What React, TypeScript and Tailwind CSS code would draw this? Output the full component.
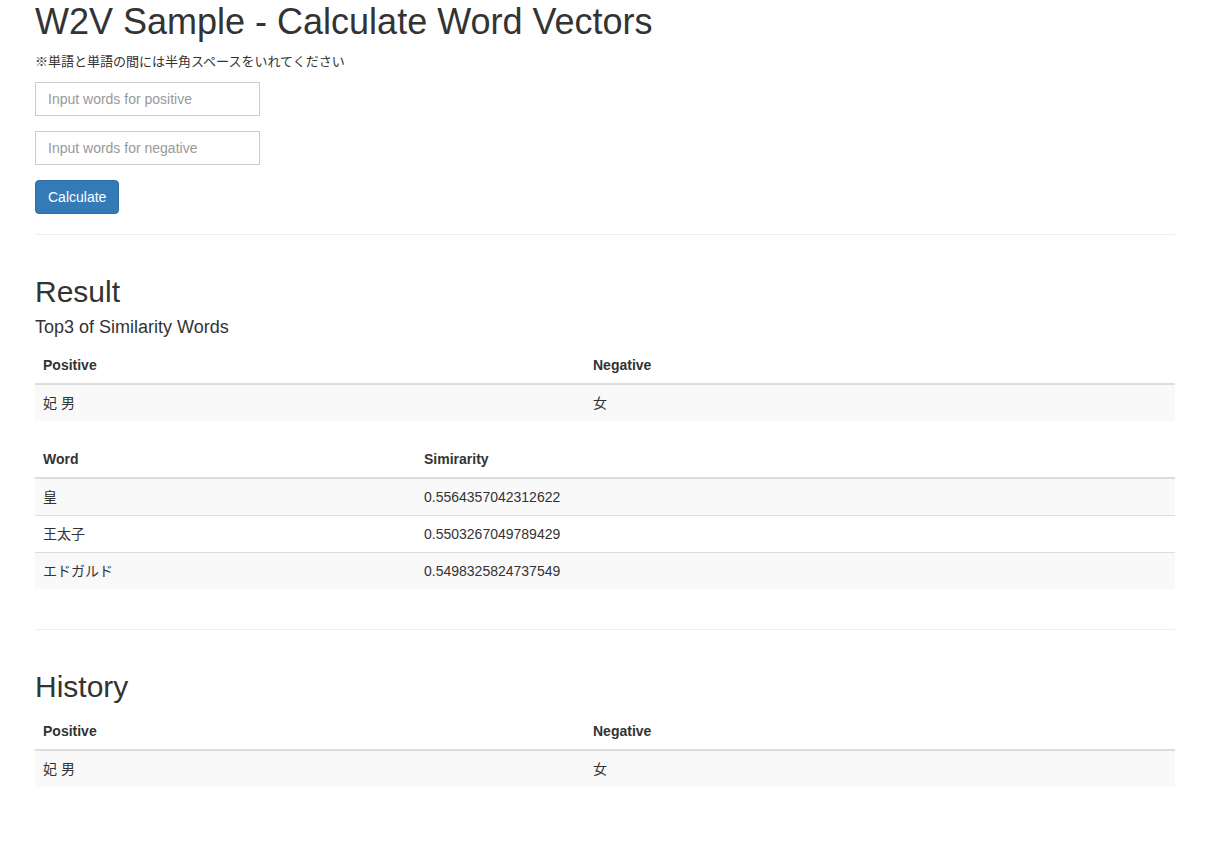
const font = { fontFamily: '"Liberation Sans", "Noto Sans CJK JP", sans-serif' };

const th = "border-b-2 border-[#ddd] p-2 text-left align-bottom font-bold leading-5";
const td = "border-t border-[#ddd] p-2 align-top leading-5";

function PairTable({ pos, neg }: { pos: string; neg: string }) {
  return (
    <table className="mb-5 w-full table-fixed border-collapse">
      <thead>
        <tr>
          <th className={`${th} w-[550px]`}>Positive</th>
          <th className={th}>Negative</th>
        </tr>
      </thead>
      <tbody>
        <tr className="bg-[#f9f9f9]">
          <td className={td}>{pos}</td>
          <td className={td}>{neg}</td>
        </tr>
      </tbody>
    </table>
  );
}

const results = [
  { word: "皇", score: "0.5564357042312622" },
  { word: "王太子", score: "0.5503267049789429" },
  { word: "エドガルド", score: "0.5498325824737549" },
];

export default function App() {
  return (
    <div className="min-h-screen bg-white text-[14px] leading-5 text-[#333]" style={font}>
      <div className="mx-auto w-[1170px] px-[15px]">
        <h1 className="mb-[10px] pt-[2px] text-[36px] leading-[1.1] font-medium">W2V Sample - Calculate Word Vectors</h1>
        <p className="mb-[10px] text-[13px] leading-5">※単語と単語の間には半角スペースをいれてください</p>
        <form onSubmit={(e) => e.preventDefault()}>
          <div className="mb-[15px]">
            <input
              type="text"
              placeholder="Input words for positive"
              className="h-[34px] w-[225px] border border-[#ccc] px-3 py-1.5 text-[14px] text-[#555] outline-none placeholder:text-[#999]"
            />
          </div>
          <div className="mb-[15px]">
            <input
              type="text"
              placeholder="Input words for negative"
              className="h-[34px] w-[225px] border border-[#ccc] px-3 py-1.5 text-[14px] text-[#555] outline-none placeholder:text-[#999]"
            />
          </div>
          <button
            type="submit"
            className="h-[34px] rounded border border-[#2e6da4] bg-[#337ab7] px-3 text-[14px] text-white"
          >
            Calculate
          </button>
        </form>

        <hr className="my-5 border-t border-[#eee]" />

        <h2 className="mt-10 mb-[10px] text-[30px] leading-[1.1] font-medium">Result</h2>
        <h4 className="mb-[10px] text-[18px] leading-[1.1] font-medium">Top3 of Similarity Words</h4>
        <PairTable pos="妃 男" neg="女" />

        <table className="mb-5 w-full table-fixed border-collapse">
          <thead>
            <tr>
              <th className={`${th} w-[381px]`}>Word</th>
              <th className={th}>Simirarity</th>
            </tr>
          </thead>
          <tbody>
            {results.map((r, i) => (
              <tr key={r.word} className={i % 2 === 0 ? "bg-[#f9f9f9]" : ""}>
                <td className={td}>{r.word}</td>
                <td className={td}>{r.score}</td>
              </tr>
            ))}
          </tbody>
        </table>

        <hr className="mt-10 mb-5 border-t border-[#eee]" />

        <h2 className="mt-10 mb-[10px] text-[30px] leading-[1.1] font-medium">History</h2>
        <PairTable pos="妃 男" neg="女" />
      </div>
    </div>
  );
}
